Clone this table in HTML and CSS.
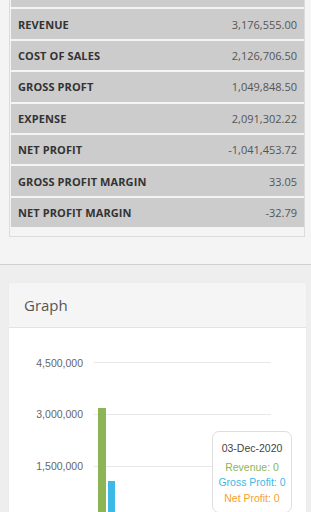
FILE: index.html
```html
<!DOCTYPE html>
<html>
<head>
<meta charset="utf-8">
<link rel="stylesheet" href="styles.css">
</head>
<body>
<section class="top-section">
  <div class="summary-panel">
    <div class="rows">
      <div class="row"></div>
      <div class="row"><span class="label">REVENUE</span><span class="value">3,176,555.00</span></div>
      <div class="row"><span class="label">COST OF SALES</span><span class="value">2,126,706.50</span></div>
      <div class="row"><span class="label">GROSS PROFT</span><span class="value">1,049,848.50</span></div>
      <div class="row"><span class="label">EXPENSE</span><span class="value">2,091,302.22</span></div>
      <div class="row"><span class="label">NET PROFIT</span><span class="value">-1,041,453.72</span></div>
      <div class="row"><span class="label">GROSS PROFIT MARGIN</span><span class="value">33.05</span></div>
      <div class="row"><span class="label">NET PROFIT MARGIN</span><span class="value">-32.79</span></div>
    </div>
  </div>
</section>
<section class="graph-section">
  <div class="card">
    <div class="card-header">Graph</div>
    <div class="card-body">
      <svg class="chart" width="297" height="190" viewBox="0 0 297 190">
        <g class="grid">
          <line x1="85" y1="34.5" x2="262" y2="34.5"/>
          <line x1="85" y1="86.5" x2="262" y2="86.5"/>
          <line x1="85" y1="138.5" x2="262" y2="138.5"/>
        </g>
        <g class="axis-labels">
          <text x="74" y="38.5">4,500,000</text>
          <text x="74" y="90">3,000,000</text>
          <text x="74" y="142">1,500,000</text>
        </g>
        <rect class="bar-rev" x="89" y="80" width="8" height="120"/>
        <rect class="bar-gp" x="99" y="153" width="7" height="60"/>
      </svg>
      <div class="tooltip">
        <div class="tt-date">03-Dec-2020</div>
        <div class="tt-rev">Revenue: 0</div>
        <div class="tt-gp">Gross Profit: 0</div>
        <div class="tt-np">Net Profit: 0</div>
      </div>
    </div>
  </div>
</section>
</body>
</html>
```
FILE: styles.css
```css
* { box-sizing: border-box; }
html, body {
  margin: 0;
  padding: 0;
}
body {
  background: #efefef;
  font-family: "Open Sans", "Liberation Sans", sans-serif;
  overflow: hidden;
  height: 512px;
}
.top-section {
  background: #f4f4f4;
  border-bottom: 1px solid #cfcfcf;
  padding: 0 6px 27px 9px;
}
.summary-panel {
  border: 1px solid #dcdcdc;
  border-top: none;
  background: #f4f4f4;
  padding: 0 0 9px 1px;
  margin-top: -22px;
}
.rows {
  display: flex;
  flex-direction: column;
  gap: 2px;
}
.row {
  height: 29.4px;
  background: #cccccc;
  display: flex;
  align-items: center;
  justify-content: space-between;
  padding: 0 7px;
  font-size: 11px;
}
.label {
  font-weight: 700;
  color: #333;
  letter-spacing: 0.1px;
}
.value {
  color: #555;
}
.graph-section {
  padding: 18px 5px 0 9px;
  background: #eeeeee;
}
.card {
  background: #fff;
  box-shadow: 0 0 1px rgba(0,0,0,0.06);
}
.card-header {
  background: #f5f5f5;
  height: 45px;
  border-bottom: 1px solid #e3e3e3;
  padding: 0 15px;
  display: flex;
  align-items: center;
  font-size: 15px;
  color: #555;
}
.card-body {
  position: relative;
  height: 200px;
  background: #fff;
}
.chart {
  display: block;
}
.grid line {
  stroke: #e8e8e8;
  stroke-width: 1;
}
.axis-labels text {
  font-family: "Liberation Sans", Arial, sans-serif;
  font-size: 10.5px;
  fill: #666;
  text-anchor: end;
}
.bar-rev { fill: #8eb555; }
.bar-gp { fill: #3cb9e6; }
.tooltip {
  position: absolute;
  left: 203px;
  top: 103px;
  width: 80px;
  height: 82px;
  background: #fff;
  border: 1px solid #dedede;
  border-radius: 7px;
  font-family: "Liberation Sans", Arial, sans-serif;
  font-size: 10.5px;
  text-align: center;
  padding-top: 9px;
  line-height: 15.5px;
}
.tt-date {
  color: #444;
  margin-bottom: 3px;
}
.tt-rev { color: #8eb555; }
.tt-gp { color: #3cb9e6; }
.tt-np { color: #f7a12c; }
```
